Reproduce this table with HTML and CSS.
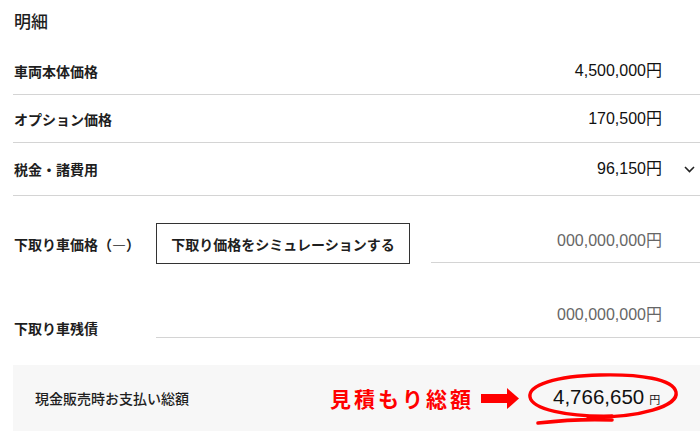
FILE: index.html
```html
<!DOCTYPE html>
<html lang="ja">
<head>
<meta charset="utf-8">
<title>明細</title>
<link rel="stylesheet" href="styles.css">
</head>
<body>
<div class="wrap">
  <h2 class="title">明細</h2>

  <div class="row r1">
    <div class="label">車両本体価格</div>
    <div class="value">4,500,000円</div>
    <div class="end"></div>
  </div>
  <div class="row r2">
    <div class="label">オプション価格</div>
    <div class="value">170,500円</div>
    <div class="end"></div>
  </div>
  <div class="row r3">
    <div class="label">税金・諸費用</div>
    <div class="value">96,150円</div>
    <div class="end">
      <svg class="chev" width="11" height="7" viewBox="0 0 11 7"><path d="M1 1 L5.5 5.5 L10 1" fill="none" stroke="#222" stroke-width="1.6"/></svg>
    </div>
  </div>

  <div class="trade">
    <div class="tlabel">下取り車価格（—）</div>
    <button class="sim">下取り価格をシミュレーションする</button>
    <div class="field f1"><span class="gval">000,000,000円</span></div>
  </div>

  <div class="debt">
    <div class="tlabel dl">下取り車残債</div>
    <div class="field f2"><span class="gval">000,000,000円</span></div>
  </div>

  <div class="total">
    <div class="tot-label">現金販売時お支払い総額</div>
    <div class="note">見積もり総額</div>
    <svg class="arrow" width="38" height="21" viewBox="0 0 38 21"><rect x="0" y="6" width="27" height="9" fill="#f00"/><polygon points="26,0 38,10.5 26,21" fill="#f00"/></svg>
    <div class="amount">4,766,650<span class="yen">円</span></div>
    <svg class="circle" viewBox="13 366 687 66" width="687" height="66">
      <path d="M588 418 C640 419 679 407 676 393 C673 380 640 375 600 376 C556 377 528 386 530 398 C532 410 566 418 612 417" fill="none" stroke="#f00" stroke-width="3.4" stroke-linecap="round"/>
      <path d="M538 424 C565 421 590 420 612 421" fill="none" stroke="#f00" stroke-width="3.6" stroke-linecap="round"/>
    </svg>
  </div>
</div>
</body>
</html>
```

FILE: styles.css
```css
html, body {
  margin: 0;
  padding: 0;
  background: #fff;
}
body {
  font-family: "Noto Sans CJK JP", "Noto Sans", sans-serif;
  color: #1e1e1e;
  overflow: hidden;
}
.wrap {
  padding-left: 13px;
}
.title {
  margin: 0;
  height: 47px;
  box-sizing: border-box;
  padding: 11px 0 0 1px;
  font-size: 17px;
  line-height: 20px;
  font-weight: 500;
}
.row {
  display: flex;
  align-items: center;
  border-bottom: 1px solid #d4d4d4;
}
.r1, .r2 { height: 47px; }
.r3 { height: 52px; }
.label {
  flex: 1;
  padding-left: 1px;
  font-size: 14px;
  line-height: 20px;
  font-weight: bold;
}
.value {
  font-family: "Liberation Sans", "Noto Sans CJK JP", sans-serif;
  font-size: 16px;
  line-height: 20px;
  color: #111;
}
.end {
  width: 38px;
  display: flex;
  align-items: center;
  padding-left: 22px;
  box-sizing: border-box;
}
.chev { display: block; }

.trade {
  display: flex;
  align-items: center;
  padding-top: 27px;
}
.tlabel {
  width: 143px;
  padding-left: 1px;
  box-sizing: border-box;
  font-size: 14px;
  line-height: 20px;
  font-weight: bold;
}
.sim {
  width: 254px;
  height: 41px;
  margin: 0;
  padding: 0;
  background: #fff;
  border: 1.5px solid #333;
  font-family: "Noto Sans CJK JP", sans-serif;
  font-size: 14px;
  font-weight: bold;
  color: #1e1e1e;
}
.field {
  flex: 1;
  display: flex;
  justify-content: flex-end;
  padding-right: 38px;
  border-bottom: 1px solid #d4d4d4;
  box-sizing: border-box;
}
.f1 {
  margin-left: 21px;
  height: 40px;
  align-items: center;
  align-self: flex-start;
  padding-bottom: 4px;
}
.gval {
  font-family: "Liberation Sans", "Noto Sans CJK JP", sans-serif;
  font-size: 16px;
  line-height: 20px;
  color: #666;
}
.debt {
  display: flex;
  align-items: flex-end;
  margin-top: 41px;
}
.f2 {
  padding-bottom: 12px;
}
.total {
  position: relative;
  margin-top: 27px;
  height: 66px;
  background: #f7f7f7;
  display: flex;
  align-items: center;
  padding-left: 22px;
}
.tot-label {
  width: 295px;
  font-size: 14px;
  line-height: 20px;
  font-weight: 500;
}
.note {
  color: #f00;
  font-size: 21px;
  line-height: 24px;
  font-weight: bold;
  letter-spacing: 3px;
  width: 151px;
  white-space: nowrap;
}
.arrow {
  display: block;
  flex: none;
}
.amount {
  margin-left: 34px;
  font-family: "Liberation Sans", "Noto Sans CJK JP", sans-serif;
  font-size: 20.5px;
  line-height: 24px;
  color: #111;
}
.yen {
  margin-left: 5px;
  font-size: 11px;
  font-family: "Noto Sans CJK JP", sans-serif;
}
.circle {
  position: absolute;
  left: 0;
  top: 0;
  overflow: visible;
  pointer-events: none;
}
```
